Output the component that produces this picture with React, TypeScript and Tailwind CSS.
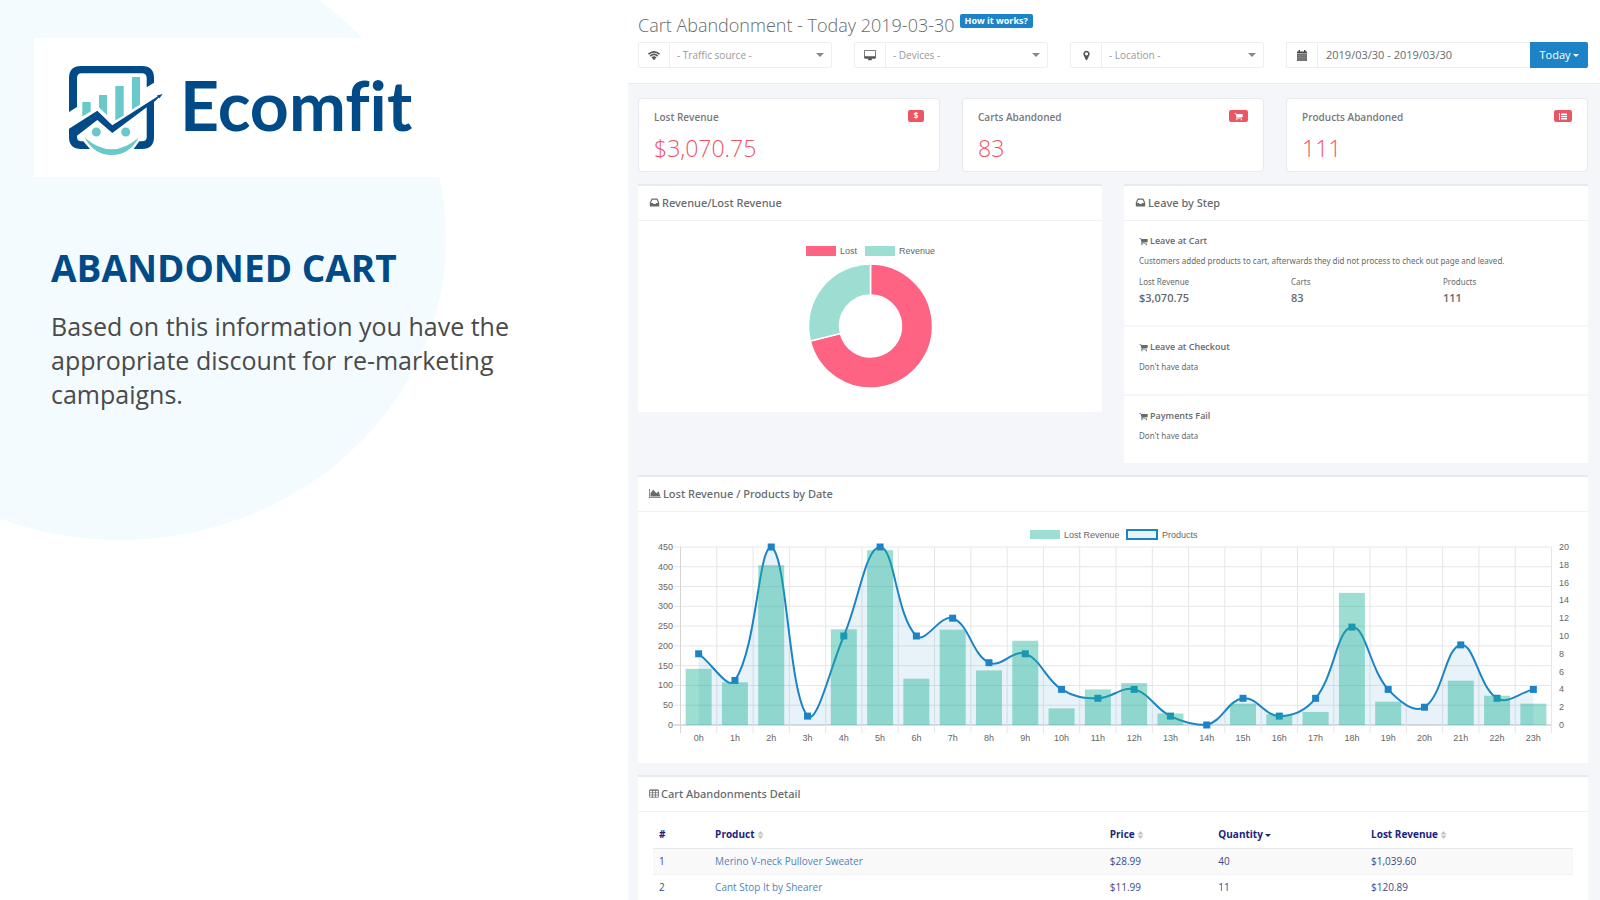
import type { ReactNode } from "react";

const GLYPHS = {
  cart: {
    w: 1792,
    d: "M704 1536q0 52-38 90t-90 38-90-38-38-90 38-90 90-38 90 38 38 90zm896 0q0 52-38 90t-90 38-90-38-38-90 38-90 90-38 90 38 38 90zm128-1088v512q0 24-16.5 42.5t-40.5 21.5l-1044 122q13 60 13 70 0 16-24 64h920q26 0 45 19t19 45-19 45-45 19h-1024q-26 0-45-19t-19-45q0-11 8-31.5t16-36 21.5-40 15.5-29.5l-177-823h-204q-26 0-45-19t-19-45 19-45 45-19h256q16 0 28.5 6.5t19.5 15.5 13 24.5 8 26 5.5 29.5 4.5 26h1201q26 0 45 19t19 45z",
  },
  inbox: {
    w: 1792,
    d: "M1151 960h316q-1-3-2.5-8.5t-2.5-7.5l-212-496h-708l-212 496q-1 3-2.5 8.5t-2.5 7.5h316l95 192h320zm513 30v482q0 26-19 45t-45 19h-1408q-26 0-45-19t-19-45v-482q0-62 25-123l238-552q10-25 36.5-42t52.5-17h832q26 0 52.5 17t36.5 42l238 552q25 61 25 123z",
  },
  area: {
    w: 2048,
    d: "M2048 1536v128h-2048v-1536h128v1408h1920zm-384-1024l256 896h-1664v-576l448-576 576 576z",
  },
  desktop: {
    w: 1920,
    d: "M1792 992v-832q0-13-9.500-22.500t-22.500-9.500h-1600q-13 0-22.500 9.500t-9.500 22.500v832q0 13 9.500 22.500t22.500 9.500h1600q13 0 22.500-9.500t9.500-22.500zm128-832v1088q0 66-47 113t-113 47h-544q0 37 16 77.500t32 71 16 43.500q0 26-19 45t-45 19h-512q-26 0-45-19t-19-45q0-14 16-44t32-70 16-78h-544q-66 0-113-47t-47-113v-1088q0-66 47-113t113-47h1600q66 0 113 47t47 113z",
  },
  marker: {
    w: 1792,
    d: "M1152 640q0-106-75-181t-181-75-181 75-75 181 75 181 181 75 181-75 75-181zm256 0q0 109-33 179l-364 774q-16 33-47.5 52t-67.5 19-67.5-19-46.5-52l-365-774q-33-70-33-179 0-212 150-362t362-150 362 150 150 362z",
  },
};

function Glyph({ name, className }: { name: keyof typeof GLYPHS; className: string }) {
  const g = GLYPHS[name];
  return (
    <svg viewBox={`0 0 ${g.w} 1792`} className={className} fill="currentColor" aria-hidden="true">
      <path d={g.d} />
    </svg>
  );
}

function WifiIcon() {
  return (
    <svg viewBox="0 0 24 18" className="h-[9px] w-3" fill="none" stroke="currentColor" strokeWidth="3.200" aria-hidden="true">
      <path d="M1 6.500Q12 -3 23 6.500" />
      <path d="M4.500 10.300Q12 3.500 19.500 10.300" />
      <path d="M8 14Q12 10.500 16 14" />
      <path d="M12 13l3 2.500L12 18.500l-3-3z" fill="currentColor" stroke="none" />
    </svg>
  );
}

function CalendarIcon() {
  return (
    <svg viewBox="0 0 20 22" className="h-[11px] w-[10px]" aria-hidden="true">
      <path d="M0 3h3V0h3v3h8V0h3v3h3v4H0z" fill="#4a4a4a" />
      <path d="M0 8h20v14H0z" fill="#666" />
      <path d="M0 11.500h20M0 15h20M0 18.500h20M4 8v14M8 8v14M12 8v14M16 8v14" stroke="#999" strokeWidth="0.800" />
    </svg>
  );
}

function TableIcon() {
  return (
    <svg viewBox="0 0 20 17" className="h-[9px] w-[10px]" aria-hidden="true">
      <rect x="1" y="1" width="18" height="15" rx="1" fill="none" stroke="currentColor" strokeWidth="1.600" />
      <path d="M1 2.500h18M1 7h18M1 11.500h18M7 2v14M13 2v14" stroke="currentColor" strokeWidth="1.500" />
    </svg>
  );
}

function ListIcon() {
  return (
    <svg viewBox="0 0 16 14" className="h-[7px] w-2" fill="#fff" aria-hidden="true">
      <path d="M0 0h2v14H0zM4 1h12v3H4zM4 5.500h12v3H4zM4 10h12v3H4z" />
    </svg>
  );
}

function Caret({ className }: { className: string }) {
  return (
    <svg viewBox="0 0 8 4" className={className} fill="currentColor" aria-hidden="true">
      <path d="M0 0h8L4 4z" />
    </svg>
  );
}

function Logo() {
  return (
    <div className="flex items-start gap-4">
      <svg viewBox="-1 -1 96 92" className="h-[92px] w-24" aria-hidden="true">
        <g fill="#004b87">
          <path d="M0 46V12Q0 0 12 0H73Q85 0 85 12V16.700L77.700 21.300V12Q77.700 7.300 73 7.300H12.500Q8 7.300 8 12V41z" />
          <path d="M0 62.700L28.300 44.700 43.300 59.300 88.500 30.500 88 29.500 93.700 28 90.500 32.300 89.800 31.500 85 36V71Q85 83 73 83H64.700L70.300 75.300H73Q77.700 75.300 77.700 71V41.300L43.300 67 28.300 54 8 69.700V71Q8 75.300 12.500 75.300H14.300L21 83H12Q0 83 0 71z" />
        </g>
        <g fill="#69c8c9">
          <path d="M13.300 36H21.700V45.500L13.300 50.500zM30 29H38V49L30 41.500zM46.300 20H54.700V49.500L46.300 54.500zM63 11H71V38.500L63 43.500z" />
          <path d="M15.700 71.500Q29 83.300 42.700 83.300T69.700 71.500Q60.500 89 42.700 89T15.700 71.500z" />
          <circle cx="27.300" cy="66" r="4.500" />
          <circle cx="56.700" cy="66" r="4.500" />
        </g>
      </svg>
      <span className="font-['Lato'] text-[68px] leading-[80px] font-bold text-[#004b87] [font-variant-ligatures:none]">
        Ecomfit
      </span>
    </div>
  );
}

function Addon({ children }: { children: ReactNode }) {
  return (
    <span className="flex w-[31px] shrink-0 items-center justify-center border-r border-[#eeeff0] text-[#555]">{children}</span>
  );
}

function Filter({ id, label, icon }: { id: string; label: string; icon: ReactNode }) {
  return (
    <div className="relative col-span-2 flex h-[26px] rounded-xs border border-[#eeeff0]">
      <Addon>{icon}</Addon>
      <select
        id={id}
        aria-label={id}
        className="min-w-0 flex-1 appearance-none bg-transparent px-[7px] text-[10px] text-[#999] outline-none"
      >
        <option>{label}</option>
      </select>
      <Caret className="pointer-events-none absolute top-[10px] right-[7px] h-1 w-2 text-[#888]" />
    </div>
  );
}

function Stat({ title, value, icon }: { title: string; value: string; icon: ReactNode }) {
  return (
    <section className="rounded-sm border border-[#e7eaec] bg-white px-[15px] pt-[11px] pb-[7px]">
      <div className="flex items-start justify-between">
        <h2 className="text-[10px] leading-[14px] font-semibold text-[#77797b]">{title}</h2>
        <span className="flex h-3 min-w-4 items-center justify-center rounded-xs bg-[#ed5565] px-[5px] text-[8px] font-bold text-white">
          {icon}
        </span>
      </div>
      <p className="mt-2 text-[23px] leading-8 font-light text-[#ed5565]">{value}</p>
    </section>
  );
}

function Panel({ title, icon, children }: { title: string; icon: ReactNode; children: ReactNode }) {
  return (
    <section className="border-t-2 border-[#e7eaec] bg-white text-[#676a6c]">
      <header className="flex h-[35px] items-center gap-[2px] border-b border-[#f0f1f2] px-[11px] pb-px">
        {icon}
        <h2 className="font-['Noto_Sans'] text-[11px] leading-4 font-medium">{title}</h2>
      </header>
      {children}
    </section>
  );
}

function Donut() {
  const cx = 232.5;
  const cy = 105;
  const R = 62;
  const r = 31;
  const a = (256 * Math.PI) / 180;
  const px = (rad: number) => cx + rad * Math.sin(a);
  const py = (rad: number) => cy - rad * Math.cos(a);
  return (
    <svg viewBox="0 0 464 191" className="block w-full font-['Liberation_Sans']" fontSize="9" fill="#666" role="img" aria-label="Revenue/Lost Revenue">
      <rect x="168" y="25" width="30" height="10" fill="#ff6384" />
      <text x="202" y="33">Lost</text>
      <rect x="227" y="25" width="30" height="10" fill="#9cded1" />
      <text x="261" y="33">Revenue</text>
      <g stroke="#fff" strokeWidth="1.500">
        <path
          d={`M${cx} ${cy - R}A${R} ${R} 0 1 1 ${px(R)} ${py(R)}L${px(r)} ${py(r)}A${r} ${r} 0 1 0 ${cx} ${cy - r}z`}
          fill="#ff6384"
        />
        <path
          d={`M${cx} ${cy - R}A${R} ${R} 0 0 0 ${px(R)} ${py(R)}L${px(r)} ${py(r)}A${r} ${r} 0 0 1 ${cx} ${cy - r}z`}
          fill="#9cded1"
        />
      </g>
    </svg>
  );
}

const REVENUE = [142, 108, 404, 0, 242, 442, 117, 241, 138, 213, 42, 90, 106, 29, 0, 54, 27, 33, 334, 59, 0, 112, 74, 54];
const PRODUCTS = [8, 5, 20, 1, 10, 20, 10, 12, 7, 8, 4, 3, 4, 1, 0, 3, 1, 3, 11, 4, 2, 9, 3, 4];

const LEFT = 42.5;
const RIGHT = 913.5;
const TOP = 35;
const BOTTOM = 213;
const STEP = (RIGHT - LEFT) / 24;

const points = PRODUCTS.map((v, i) => ({
  x: LEFT + STEP * (i + 0.5),
  y: BOTTOM - ((BOTTOM - TOP) * v) / 20,
}));

const clamp = (v: number) => Math.min(BOTTOM, Math.max(TOP, v));

// Cubic spline through the points, tension 0.4, with control points kept inside the plot
function splinePath() {
  const controls = points.map((p, i) => {
    const prev = points[i - 1] ?? p;
    const next = points[i + 1] ?? p;
    const d1 = Math.hypot(p.x - prev.x, p.y - prev.y);
    const d2 = Math.hypot(next.x - p.x, next.y - p.y);
    const a = (0.4 * d1) / (d1 + d2);
    const b = (0.4 * d2) / (d1 + d2);
    return {
      inX: p.x - a * (next.x - prev.x),
      inY: clamp(p.y - a * (next.y - prev.y)),
      outX: p.x + b * (next.x - prev.x),
      outY: clamp(p.y + b * (next.y - prev.y)),
    };
  });
  return points
    .map((p, i) =>
      i === 0
        ? `M${p.x} ${p.y}`
        : `C${controls[i - 1].outX} ${controls[i - 1].outY} ${controls[i].inX} ${controls[i].inY} ${p.x} ${p.y}`,
    )
    .join("");
}

function DateChart() {
  const line = splinePath();
  const rows = Array.from({ length: 10 }, (_, i) => i);
  const cols = Array.from({ length: 25 }, (_, i) => i);
  const rightTicks = Array.from({ length: 11 }, (_, i) => i);
  return (
    <svg viewBox="0 0 950 251" className="block w-full font-['Liberation_Sans']" fontSize="9" fill="#666" role="img" aria-label="Lost Revenue / Products by Date">
      <rect x="392" y="18" width="30" height="9" fill="#9cded1" />
      <text x="426" y="26">Lost Revenue</text>
      <rect x="489" y="18" width="30" height="9" fill="#e8f2f9" stroke="#1c84c6" strokeWidth="2" />
      <text x="524" y="26">Products</text>

      {rows.map((i) => {
        const y = BOTTOM - ((BOTTOM - TOP) * i) / 9;
        return (
          <g key={i}>
            <line x1={LEFT - 7} x2={RIGHT} y1={y} y2={y} stroke={i === 0 ? "#bfbfbf" : "#e6e6e6"} />
            <text x="35" y={y + 3} textAnchor="end">{i * 50}</text>
          </g>
        );
      })}
      {cols.map((i) => {
        const x = LEFT + STEP * i;
        return <line key={i} x1={x} x2={x} y1={TOP} y2={BOTTOM + 8} stroke={i === 0 ? "#d5d5d5" : "#e6e6e6"} />;
      })}
      {rightTicks.map((i) => (
        <text key={i} x="921" y={BOTTOM - ((BOTTOM - TOP) * i) / 10 + 3}>{i * 2}</text>
      ))}

      <path d={`${line}L${points[23].x} ${BOTTOM}L${points[0].x} ${BOTTOM}z`} fill="#1c84c6" fillOpacity="0.1" />
      <path d={line} fill="none" stroke="#1c84c6" strokeWidth="2" />
      {points.map((p, i) => (
        <rect key={i} x={p.x - 3.5} y={p.y - 3.5} width="7" height="7" fill="#1c84c6" />
      ))}
      {REVENUE.map((v, i) => {
        const h = ((BOTTOM - TOP) * v) / 450;
        return <rect key={i} x={points[i].x - 13} y={BOTTOM - h} width="26" height={h} fill="#1ab394" fillOpacity="0.43" />;
      })}
      {points.map((p, i) => (
        <text key={i} x={p.x} y="229" textAnchor="middle">{`${i}h`}</text>
      ))}
    </svg>
  );
}

function Step({ title, children }: { title: string; children: ReactNode }) {
  return (
    <div className="border-b-2 border-[#f5f6f7] px-[15px] pt-3 pb-[19px] font-['Noto_Sans'] text-[8px] last:border-b-0">
      <h3 className="flex items-center gap-[2px] font-['Open_Sans'] text-[9px] leading-4 font-semibold">
        <Glyph name="cart" className="size-[9px]" />
        {title}
      </h3>
      {children}
    </div>
  );
}

function SortIcon() {
  return (
    <svg viewBox="0 0 7 8" className="ml-[2px] inline h-2 w-[7px] align-[-1px]" fill="#c4c4c4" aria-hidden="true">
      <path d="M0.500 3.500h6L3.500 0zM0.500 4.500h6L3.500 8z" />
    </svg>
  );
}

const ITEMS = [
  ["1", "Merino V-neck Pullover Sweater", "$28.99", "40", "$1,039.60"],
  ["2", "Cant Stop It by Shearer", "$11.99", "11", "$120.89"],
];

export default function App() {
  return (
    <div className="flex h-screen overflow-hidden bg-white font-['Open_Sans',sans-serif]">
      <aside className="relative w-[39.25%] shrink-0 overflow-hidden">
        <div className="absolute top-[-62px] left-[-206px] h-[602px] w-[652px] rounded-[50%] bg-[#f3fbff]" />
        <div className="relative flex flex-col pt-[38px]">
          <div className="ml-[34px] flex h-[139px] items-start bg-white pt-[27px] pl-[34px]">
            <Logo />
          </div>
          <div className="mt-[66px] px-[51px]">
            <h1 className="text-[37px] leading-[50px] font-bold text-[#004b87]">ABANDONED CART</h1>
            <p className="mt-4 max-w-[470px] text-[25px] leading-[34px] text-[#4a4a4a]">
              Based on this information you have the appropriate discount for re-marketing campaigns.
            </p>
          </div>
        </div>
      </aside>

      <main className="min-w-0 flex-1 bg-[#f4f6fa]">
        <div className="border-b border-[#e7eaec] bg-white pt-2 pr-3 pb-[15px] pl-[10px]">
          <div className="flex items-start gap-[5px]">
            <h1 className="text-[18px] leading-[34px] font-light text-[#676a6c]">Cart Abandonment - Today 2019-03-30</h1>
            <button className="mt-[6px] h-[14px] rounded-xs bg-[#1c84c6] px-[5px] text-[9px] leading-[14px] font-bold text-white">
              How it works?
            </button>
          </div>
          <form className="grid grid-cols-9 gap-x-[22px]">
            <Filter id="traffic-source" label="- Traffic source -" icon={<WifiIcon />} />
            <Filter id="devices" label="- Devices -" icon={<Glyph name="desktop" className="h-[11px] w-3" />} />
            <Filter id="location" label="- Location -" icon={<Glyph name="marker" className="size-[11px]" />} />
            <div className="col-span-3 flex h-[26px] border border-r-0 border-[#eeeff0]">
              <Addon>
                <CalendarIcon />
              </Addon>
              <input
                aria-label="Date range"
                defaultValue="2019/03/30 - 2019/03/30"
                className="min-w-0 flex-1 px-2 text-[11px] text-[#676a6c] outline-none"
              />
              <button type="button" className="-my-px flex w-[58px] items-center justify-center gap-[2px] rounded-r-xs bg-[#1c84c6] text-[11px] text-white">
                Today
                <Caret className="mt-px h-[3px] w-[6px]" />
              </button>
            </div>
          </form>
        </div>

        <div className="flex flex-col gap-3 pt-[14px] pr-3 pl-[10px]">
          <div className="grid grid-cols-3 gap-[22px]">
            <Stat title="Lost Revenue" value="$3,070.75" icon="$" />
            <Stat title="Carts Abandoned" value="83" icon={<Glyph name="cart" className="size-[9px]" />} />
            <Stat title="Products Abandoned" value="111" icon={<ListIcon />} />
          </div>

          <div className="grid grid-cols-2 items-start gap-[22px]">
            <Panel title="Revenue/Lost Revenue" icon={<Glyph name="inbox" className="size-[11px]" />}>
              <Donut />
            </Panel>
            <Panel title="Leave by Step" icon={<Glyph name="inbox" className="size-[11px]" />}>
              <Step title="Leave at Cart">
                <p className="mt-1 leading-4">
                  Customers added products to cart, afterwards they did not process to check out page and leaved.
                </p>
                <dl className="mt-[5px] grid grid-cols-3 gap-x-[22px] leading-4">
                  {[
                    ["Lost Revenue", "$3,070.75"],
                    ["Carts", "83"],
                    ["Products", "111"],
                  ].map(([k, v]) => (
                    <div key={k}>
                      <dt>{k}</dt>
                      <dd className="font-['Open_Sans'] text-[11px] font-semibold">{v}</dd>
                    </div>
                  ))}
                </dl>
              </Step>
              <Step title="Leave at Checkout">
                <p className="mt-1 leading-4">Don't have data</p>
              </Step>
              <Step title="Payments Fail">
                <p className="mt-1 leading-4">Don't have data</p>
              </Step>
            </Panel>
          </div>

          <Panel title="Lost Revenue / Products by Date" icon={<Glyph name="area" className="h-[11px] w-3" />}>
            <DateChart />
          </Panel>

          <Panel title="Cart Abandonments Detail" icon={<TableIcon />}>
            <div className="px-[15px] pt-[10px]">
              <table className="w-full table-fixed text-left text-[10px] text-[#3c4a8c]">
                <colgroup>
                  <col className="w-[6.1%]" />
                  <col className="w-[42.9%]" />
                  <col className="w-[11.8%]" />
                  <col className="w-[16.6%]" />
                  <col />
                </colgroup>
                <thead>
                  <tr className="h-[26px] border-b border-[#e7eaec] text-[#1a237e]">
                    <th className="px-[6px] font-bold">#</th>
                    <th className="px-[6px] font-bold">Product<SortIcon /></th>
                    <th className="px-[6px] font-bold">Price<SortIcon /></th>
                    <th className="px-[6px] font-bold">
                      Quantity
                      <Caret className="ml-[2px] inline h-[3px] w-[6px]" />
                    </th>
                    <th className="px-[6px] font-bold">Lost Revenue<SortIcon /></th>
                  </tr>
                </thead>
                <tbody>
                  {ITEMS.map(([n, name, price, qty, lost], i) => (
                    <tr key={n} className={i === 0 ? "h-[26px] border-b border-[#f1f2f3] bg-[#f9f9f9]" : "h-[26px]"}>
                      <td className="px-[6px]">{n}</td>
                      <td className="px-[6px]">
                        <a href="#" className="text-[#5383b8]">{name}</a>
                      </td>
                      <td className="px-[6px]">{price}</td>
                      <td className="px-[6px]">{qty}</td>
                      <td className="px-[6px]">{lost}</td>
                    </tr>
                  ))}
                </tbody>
              </table>
            </div>
          </Panel>
        </div>
      </main>
    </div>
  );
}
